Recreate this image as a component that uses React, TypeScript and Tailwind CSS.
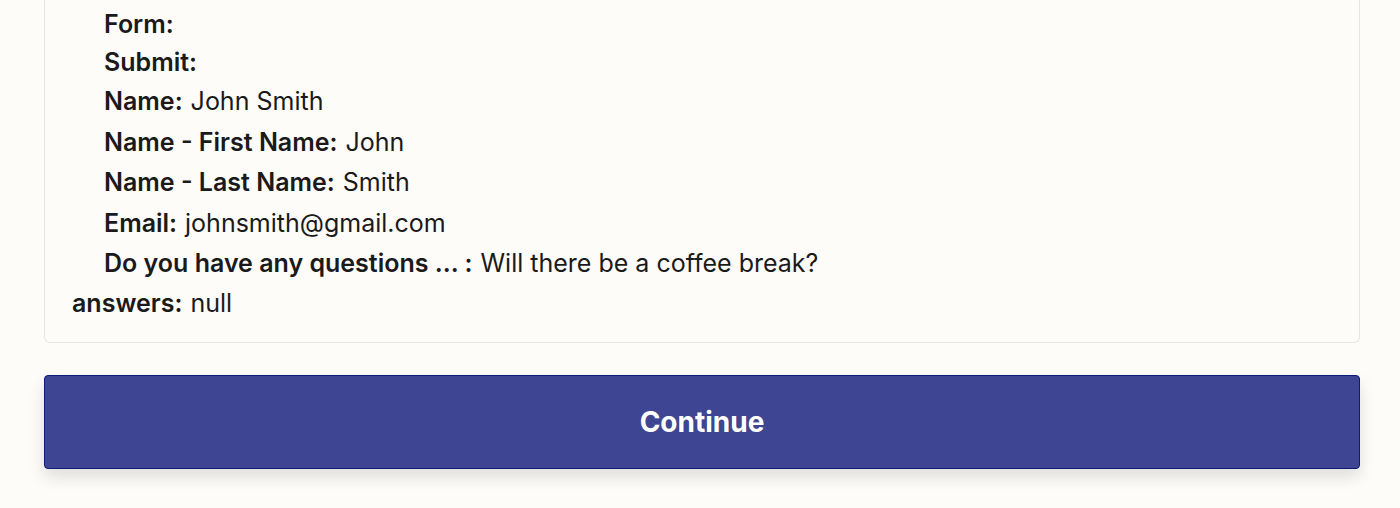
import React from "react";

const rows: { label: string; value?: string; indent: boolean; h: string }[] = [
  { label: "Form:", indent: true, h: "h-[38px]" },
  { label: "Submit:", indent: true, h: "h-[38px]" },
  { label: "Name:", value: "John Smith", indent: true, h: "h-[40px]" },
  { label: "Name - First Name:", value: "John", indent: true, h: "h-[41px]" },
  { label: "Name - Last Name:", value: "Smith", indent: true, h: "h-[40px]" },
  { label: "Email:", value: "johnsmith@gmail.com", indent: true, h: "h-[41px]" },
  { label: "Do you have any questions ... :", value: "Will there be a coffee break?", indent: true, h: "h-[40px]" },
  { label: "answers:", value: "null", indent: false, h: "h-[40px]" },
];

export default function App() {
  return (
    <div
      className="w-[1400px] h-[508px] overflow-hidden bg-[#fdfcf9] pl-[44px] pr-[40px]"
      style={{ fontFamily: "Inter, 'Noto Sans', sans-serif" }}
    >
      <div className="rounded-b-[6px] border border-t-0 border-[#e8e6e1] bg-[#fdfcf9] pl-[27px] pt-[6px] pb-[18px] text-[25px] text-[#1a1a1a]">
        {rows.map((r) => (
          <div
            key={r.label}
            className={`flex items-center ${r.h} ${r.indent ? "pl-[32px]" : ""}`}
          >
            <span className="font-semibold">{r.label}</span>
            {r.value && <span className="ml-[8px]">{r.value}</span>}
          </div>
        ))}
      </div>
      <button className="mt-[32px] flex h-[94px] w-full items-center justify-center rounded-[4px] border border-[#0f1a7a] bg-[#3e4592] text-[28px] font-bold text-white shadow-[0_8px_16px_rgba(0,0,0,0.12)]">
        Continue
      </button>
    </div>
  );
}
